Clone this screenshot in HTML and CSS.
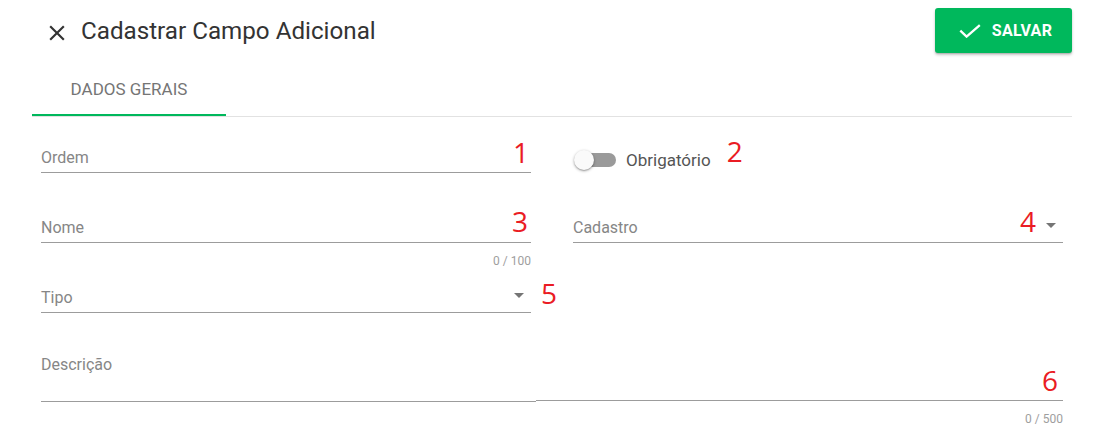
FILE: index.html
```html
<!DOCTYPE html>
<html lang="pt-BR">
<head>
<meta charset="utf-8">
<title>Cadastrar Campo Adicional</title>
<link rel="stylesheet" href="styles.css">
</head>
<body>
<div class="page">
  <header class="topbar">
    <div class="title-wrap">
      <svg class="close-icon" viewBox="0 0 24 24" aria-hidden="true"><path d="M19 6.41L17.59 5 12 10.59 6.41 5 5 6.41 10.59 12 5 17.59 6.41 19 12 13.41 17.59 19 19 17.59 13.41 12z"/></svg>
      <h1 class="title">Cadastrar Campo Adicional</h1>
    </div>
    <button class="save-btn" type="button">
      <svg class="check-icon" viewBox="0 0 22 14" aria-hidden="true"><polyline points="1.3,6.6 7.6,12.6 20.8,1.1"/></svg>
      <span>SALVAR</span>
    </button>
  </header>

  <nav class="tabs">
    <div class="tab active">DADOS GERAIS</div>
  </nav>

  <form class="form">
    <div class="field">
      <div class="control">
        <span class="label">Ordem</span>
        <span class="mark mark-1">1</span>
      </div>
      <div class="details"></div>
    </div>

    <div class="field">
      <div class="switch-row">
        <span class="switch"><span class="track"></span><span class="knob"></span></span>
        <span class="switch-label">Obrigatório<span class="mark mark-2">2</span></span>
      </div>
    </div>

    <div class="field">
      <div class="control">
        <span class="label">Nome</span>
        <span class="mark mark-3">3</span>
      </div>
      <div class="details"><span class="hint">0 / 100</span></div>
    </div>

    <div class="field">
      <div class="control">
        <span class="label">Cadastro</span>
        <svg class="arrow" viewBox="0 0 24 24" aria-hidden="true"><path d="M7 10l5 5 5-5z"/></svg>
        <span class="mark mark-4">4</span>
      </div>
      <div class="details"></div>
    </div>

    <div class="field">
      <div class="control">
        <span class="label">Tipo</span>
        <svg class="arrow" viewBox="0 0 24 24" aria-hidden="true"><path d="M7 10l5 5 5-5z"/></svg>
        <span class="mark mark-5">5</span>
      </div>
      <div class="details"></div>
    </div>

    <div class="field"></div>

    <div class="field wide">
      <div class="control-ta">
        <span class="label">Descrição</span>
        <span class="mark mark-6">6</span>
      </div>
      <div class="tline"><span class="seg-left"></span><span class="seg-right"></span></div>
      <div class="details-ta"><span class="hint">0 / 500</span></div>
    </div>
  </form>
</div>
</body>
</html>
```

FILE: styles.css
```css
html, body {
  margin: 0;
  padding: 0;
  background: #ffffff;
}

body {
  font-family: Roboto, "Liberation Sans", Arial, sans-serif;
  color: #333333;
}

.page {
  padding: 0 39px 0 32px;
}

/* ---------- header ---------- */
.topbar {
  display: flex;
  align-items: center;
  justify-content: space-between;
  padding-top: 8px;
}

.title-wrap {
  display: flex;
  align-items: center;
  padding-left: 12px;
}

.close-icon {
  width: 26px;
  height: 26px;
  fill: #333333;
  margin-top: 5px;
  margin-right: 11px;
}

.title {
  margin: 0;
  font-size: 24.2px;
  line-height: 28px;
  font-weight: 400;
  color: #333333;
}

.save-btn {
  display: flex;
  align-items: center;
  justify-content: center;
  gap: 11px;
  width: 137px;
  height: 45px;
  padding: 0 0 0 4px;
  border: none;
  border-radius: 3px;
  background: #00b85c;
  color: #ffffff;
  font-family: Roboto, "Liberation Sans", Arial, sans-serif;
  font-size: 16px;
  font-weight: 700;
  letter-spacing: 0.3px;
  box-shadow: 0 2px 3px rgba(0, 0, 0, 0.22), 0 1px 1px rgba(0, 0, 0, 0.12);
}

.check-icon {
  width: 22px;
  height: 14px;
  fill: none;
  stroke: #ffffff;
  stroke-width: 2.3;
}

/* ---------- tabs ---------- */
.tabs {
  display: flex;
  border-bottom: 1px solid #e2e2e2;
}

.tab {
  width: 194px;
  box-sizing: border-box;
  height: 63px;
  padding-top: 26px;
  text-align: center;
  font-size: 17px;
  line-height: 20px;
  font-weight: 400;
  color: #757575;
}

.tab.active {
  border-bottom: 2px solid #00b85c;
}

/* ---------- form ---------- */
.form {
  display: grid;
  grid-template-columns: 1fr 1fr;
  column-gap: 42px;
  padding: 23px 9px 0;
}

.field {
  height: 70px;
}

.field.wide {
  grid-column: 1 / -1;
  height: auto;
}

.control {
  position: relative;
  display: flex;
  align-items: flex-start;
  box-sizing: border-box;
  height: 33px;
  padding-top: 8px;
  border-bottom: 1px solid #9c9c9c;
}

.label {
  flex: 1;
  font-size: 16px;
  line-height: 20px;
  color: #868686;
}

.arrow {
  width: 24px;
  height: 24px;
  margin-top: -5px;
  fill: #757575;
  flex: none;
}

.details {
  height: 36px;
  box-sizing: border-box;
  padding-top: 7px;
  text-align: right;
}

.hint {
  font-size: 12px;
  line-height: 14px;
  color: #9e9e9e;
}

/* switch */
.switch-row {
  display: flex;
  align-items: center;
  height: 24px;
  padding-top: 8px;
}

.switch {
  position: relative;
  width: 43px;
  height: 24px;
  flex: none;
}

.track {
  position: absolute;
  left: 7px;
  top: 5px;
  width: 36px;
  height: 14px;
  border-radius: 7px;
  background: #9a9a9a;
}

.knob {
  position: absolute;
  left: 1px;
  top: 2px;
  width: 20px;
  height: 20px;
  border-radius: 50%;
  background: #fafafa;
  box-shadow: 0 1px 3px rgba(0, 0, 0, 0.35), 0 1px 1px rgba(0, 0, 0, 0.14);
}

.switch-label {
  position: relative;
  margin-left: 10px;
  font-size: 17px;
  line-height: 20px;
  color: #555555;
}

/* textarea */
.control-ta {
  position: relative;
  box-sizing: border-box;
  height: 50px;
  padding-top: 5px;
  display: flex;
}

.tline {
  display: flex;
  align-items: flex-start;
  height: 2px;
}

.seg-left {
  width: 495px;
  height: 1px;
  margin-top: 1px;
  background: #9c9c9c;
}

.seg-right {
  flex: 1;
  height: 1px;
  background: #9c9c9c;
}

.details-ta {
  padding-top: 6px;
  text-align: right;
}

/* red annotation numbers */
.mark {
  position: absolute;
  font-family: "Open Sans", "DejaVu Sans", sans-serif;
  font-size: 28px;
  line-height: 28px;
  font-weight: 400;
  color: #ea1c24;
}

.mark-1 { right: 2px; top: -2px; }
.mark-2 { left: calc(100% + 16px); top: -13px; }
.mark-3 { right: 3px; top: -3px; }
.mark-4 { right: 27px; top: -3px; }
.mark-5 { left: calc(100% + 10px); top: -1px; }
.mark-6 { right: 5px; top: 16px; }
```
